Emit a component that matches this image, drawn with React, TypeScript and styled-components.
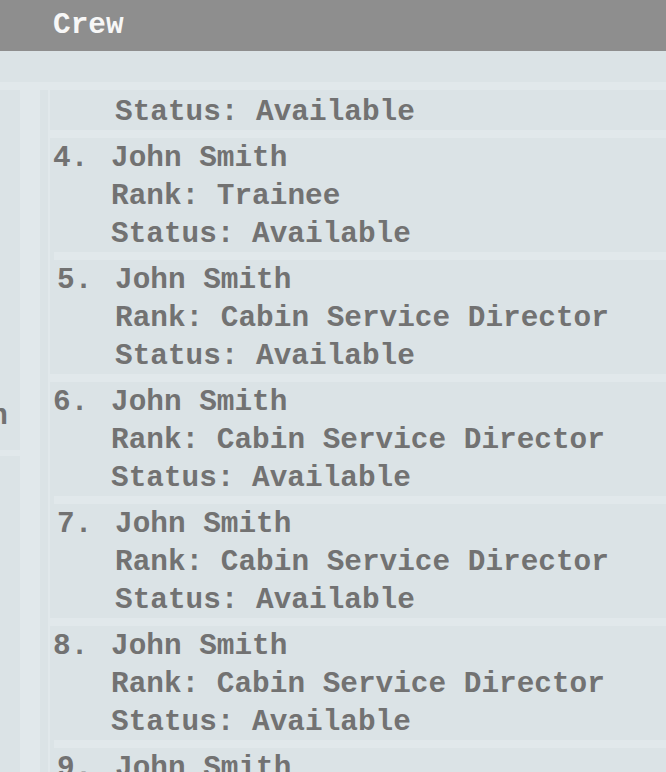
import React, { useLayoutEffect, useRef } from "react";
import styled, { createGlobalStyle } from "styled-components";

const GlobalStyle = createGlobalStyle`
  html, body {
    margin: 0;
    padding: 0;
    height: 100%;
    overflow: hidden;
    background: #e1e8eb;
  }
  #root { height: 100%; }
`;

const Page = styled.div`
  height: 772px;
  display: flex;
  flex-direction: column;
  font-family: "Courier New", Courier, "Nimbus Mono PS", "Nimbus Mono L", FreeMono, "Liberation Mono", monospace;
  font-weight: bold;
  font-size: 29.4px;
  color: #727272;
  background: #e1e8eb;
`;

const Header = styled.header`
  flex: none;
  height: 51px;
  box-sizing: border-box;
  padding: 1px 0 0 53px;
  display: flex;
  align-items: center;
  background: #8e8e8e;
  color: #f7f7f7;
  line-height: 1;
`;

const Toolbar = styled.div`
  flex: none;
  height: 31px;
  margin-bottom: 8px;
  background: #dbe3e6;
`;

const Body = styled.div`
  flex: 1;
  min-height: 0;
  display: flex;
  gap: 20px;
`;

const Side = styled.aside`
  flex: none;
  width: 20px;
  display: flex;
  flex-direction: column;
  gap: 6px;
`;

const SideCard = styled.section<{ $grow?: boolean }>`
  flex: ${(p) => (p.$grow ? "1" : "none")};
  height: ${(p) => (p.$grow ? "auto" : "360px")};
  overflow: hidden;
  display: flex;
  justify-content: flex-end;
  background: #dbe3e6;
`;

const SideText = styled.div`
  flex: none;
  width: max-content;
  padding: 4px 12px 0 0;
  line-height: 38px;
  white-space: pre;
`;

const Main = styled.main`
  flex: 1;
  min-width: 0;
  display: flex;
  padding-left: 8px;
  background: #dbe3e6;
`;

const List = styled.ol`
  flex: 1;
  margin: 0;
  padding: 0;
  list-style: none;
  border-left: 2px solid #e1e8eb;
  overflow-y: scroll;
  scrollbar-width: none;
  &::-webkit-scrollbar { display: none; }
`;

const Item = styled.li<{ $odd: boolean }>`
  box-sizing: border-box;
  height: 122px;
  display: grid;
  grid-template-columns: 58px auto;
  align-content: start;
  margin-left: ${(p) => (p.$odd ? "4px" : "0")};
  padding: 2px 0 0 3px;
  border-top: 8px solid #e1e8eb;
  background: #dbe3e6;
  line-height: 38px;
  white-space: nowrap;
`;

const Num = styled.span``;

const Lines = styled.div`
  display: flex;
  flex-direction: column;
`;

const crew = [
  { rank: "Captain" },
  { rank: "First Officer" },
  { rank: "Purser" },
  { rank: "Trainee" },
  { rank: "Cabin Service Director" },
  { rank: "Cabin Service Director" },
  { rank: "Cabin Service Director" },
  { rank: "Cabin Service Director" },
  { rank: "Cabin Service Director" },
  { rank: "Cabin Service Director" },
  { rank: "Cabin Service Director" },
];

export default function App() {
  const listRef = useRef<HTMLOListElement>(null);
  useLayoutEffect(() => {
    if (listRef.current) listRef.current.scrollTop = 326;
  }, []);

  return (
    <>
      <GlobalStyle />
      <Page>
        <Header>Crew</Header>
        <Toolbar />
        <Body>
          <Side>
            <SideCard>
              <SideText>
                {"Flight\nCrew\n\n\n\n\n\nLead\nCaptain: John Smith"}
              </SideText>
            </SideCard>
            <SideCard $grow />
          </Side>
          <Main>
            <List ref={listRef}>
              {crew.map((c, i) => (
                <Item key={i} $odd={i % 2 === 0}>
                  <Num>{i + 1}.</Num>
                  <Lines>
                    <span>John Smith</span>
                    <span>Rank: {c.rank}</span>
                    <span>Status: Available</span>
                  </Lines>
                </Item>
              ))}
            </List>
          </Main>
        </Body>
      </Page>
    </>
  );
}
